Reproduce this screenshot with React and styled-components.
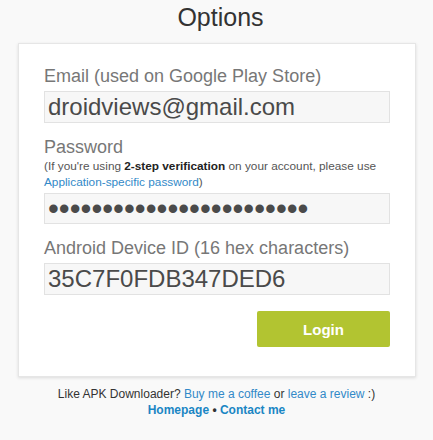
import styled, { createGlobalStyle } from "styled-components";

const GlobalStyle = createGlobalStyle`
  html, body {
    margin: 0;
    padding: 0;
    background: #f9f9f9;
    font-family: "Liberation Sans", Arial, sans-serif;
  }
`;

const Page = styled.div`
  display: flex;
  flex-direction: column;
  align-items: center;
  padding-top: 3px;
`;

const Title = styled.h1`
  margin: 0 0 12px 8px;
  font-size: 25px;
  line-height: 28px;
  font-weight: 400;
  color: #333;
`;

const Card = styled.form`
  box-sizing: border-box;
  width: 398px;
  margin-left: 1px;
  padding: 21px 25px 29px;
  background: #fff;
  border: 1px solid #e6e6e6;
  box-shadow: 0 1px 3px rgba(0, 0, 0, 0.12);
  display: flex;
  flex-direction: column;
`;

const Label = styled.label`
  font-size: 18px;
  line-height: 22px;
  color: #777;
  margin-top: ${(p) => (p.$first ? "0" : "13px")};
  margin-bottom: ${(p) => (p.$tight ? "0" : "4px")};
`;

const Hint = styled.div`
  font-size: 11.8px;
  line-height: 16px;
  color: #555;
  margin-bottom: 3px;

  & b {
    color: #222;
  }
  & a {
    color: #3289c8;
    text-decoration: none;
  }
`;

const Field = styled.input`
  box-sizing: border-box;
  width: 100%;
  height: ${(p) => (p.type === "password" ? "31px" : "32px")};
  padding: 0 3px;
  background: #f7f7f7;
  border: 1px solid #e2e2e2;
  border-radius: 0;
  font-family: "Liberation Sans", Arial, sans-serif;
  font-size: ${(p) => (p.type === "password" ? "31px" : "24px")};
  color: #4a4a4a;
  outline: none;
`;

const Actions = styled.div`
  display: flex;
  justify-content: flex-end;
  margin-top: 16px;
`;

const LoginButton = styled.button`
  width: 133px;
  height: 36px;
  border: none;
  border-radius: 2px;
  background: #b2c431;
  color: #fff;
  font-family: "Liberation Sans", Arial, sans-serif;
  font-size: 15px;
  font-weight: 700;
  cursor: pointer;
`;

const Footer = styled.div`
  margin-top: 9px;
  text-align: center;
  font-size: 12px;
  line-height: 16px;
  color: #333;

  & a {
    color: #3289c8;
    text-decoration: none;
  }
`;

const StrongLinks = styled.div`
  font-weight: 700;
  & a {
    color: #1a86c4;
  }
`;

function App() {
  return (
    <Page>
      <GlobalStyle />
      <Title>Options</Title>
      <Card onSubmit={(e) => e.preventDefault()}>
        <Label $first>Email (used on Google Play Store)</Label>
        <Field type="text" defaultValue="droidviews@gmail.com" />

        <Label $tight>Password</Label>
        <Hint>
          (If you're using <b>2-step verification</b> on your account, please use{" "}
          <a href="#">Application-specific password</a>)
        </Hint>
        <Field type="password" defaultValue="passwordpasswordpassword" />

        <Label>Android Device ID (16 hex characters)</Label>
        <Field type="text" defaultValue="35C7F0FDB347DED6" />

        <Actions>
          <LoginButton type="submit">Login</LoginButton>
        </Actions>
      </Card>
      <Footer>
        Like APK Downloader? <a href="#">Buy me a coffee</a> or{" "}
        <a href="#">leave a review</a> :)
        <StrongLinks>
          <a href="#">Homepage</a> • <a href="#">Contact me</a>
        </StrongLinks>
      </Footer>
    </Page>
  );
}

export default App;
